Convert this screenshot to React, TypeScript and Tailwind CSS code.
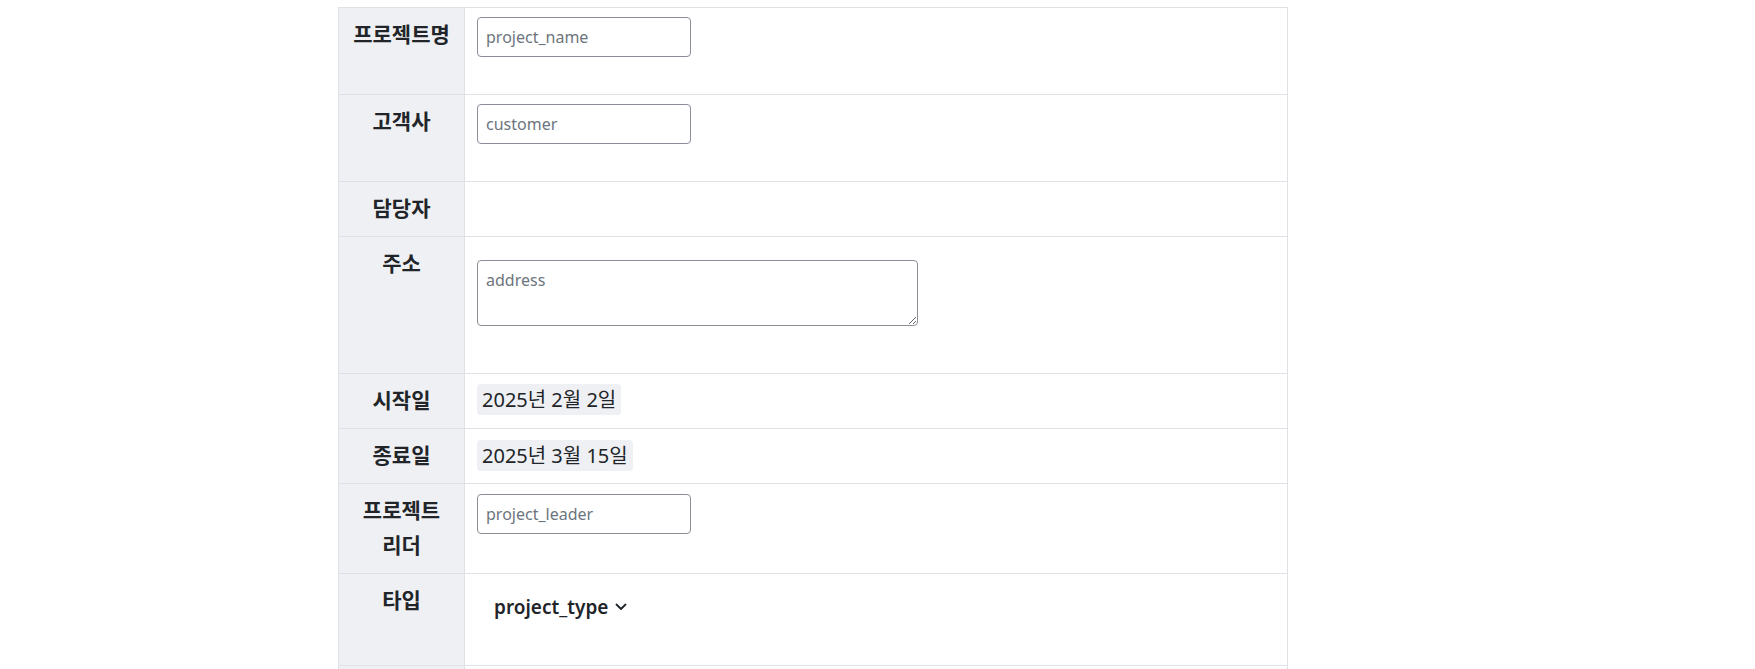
import React from 'react'

const label = "w-[126px] shrink-0 border-r border-[#dee2e6] bg-[#eff0f3] pt-[9px] text-center text-[21px] leading-[35px] font-bold text-[#212529]"
const inputCls = "block w-[214px] h-[40px] rounded-[4px] border border-[#8d8d98] bg-white px-[8px] text-[16px] text-[#212529] placeholder:text-[#6c757d] outline-none"

function Row({ h, name, children, cellCls }: { h: string; name: React.ReactNode; children?: React.ReactNode; cellCls?: string }) {
  return (
    <div className={`flex border-b border-[#dee2e6] ${h}`}>
      <div className={label}>{name}</div>
      <div className={`flex-1 px-[12px] ${cellCls ?? 'pt-[9px]'}`}>{children}</div>
    </div>
  )
}

function DateChip({ text }: { text: string }) {
  return (
    <span className="inline-block rounded-[4px] bg-[#eff0f3] px-[5px] pt-[1px] text-[20px] leading-[30px] text-[#212529]">{text}</span>
  )
}

export default function App() {
  return (
    <div className="min-h-screen bg-white pt-[7px] font-['Noto_Sans','Noto_Sans_CJK_KR',sans-serif]">
      <div className="ml-[338px] w-[950px] border-l border-t border-r border-[#dee2e6]">
        <Row h="h-[87px]" name="프로젝트명">
          <input className={inputCls} placeholder="project_name" />
        </Row>
        <Row h="h-[87px]" name="고객사">
          <input className={inputCls} placeholder="customer" />
        </Row>
        <Row h="h-[55px]" name="담당자" />
        <Row h="h-[137px]" name="주소" cellCls="pt-[23px]">
          <textarea
            className="block w-[441px] h-[66px] rounded-[4px] border border-[#8d8d98] bg-white px-[8px] py-[6px] text-[16px] leading-[26px] text-[#212529] placeholder:text-[#6c757d] outline-none"
            placeholder="address"
          />
        </Row>
        <Row h="h-[55px]" name="시작일" cellCls="pt-[10px]">
          <DateChip text="2025년 2월 2일" />
        </Row>
        <Row h="h-[55px]" name="종료일" cellCls="pt-[11px]">
          <DateChip text="2025년 3월 15일" />
        </Row>
        <Row h="h-[90px]" name={<>프로젝트<br />리더</>} cellCls="pt-[10px]">
          <input className={inputCls} placeholder="project_leader" />
        </Row>
        <Row h="h-[92px]" name="타입" cellCls="pt-[18px]">
          <button className="flex items-center gap-[7px] pl-[17px] text-[19px] leading-[30px] font-semibold text-[#212529]">
            project_type
            <svg width="12" height="8" viewBox="0 0 12 8" fill="none">
              <path d="M1.5 1.5 L6 6 L10.5 1.5" stroke="#212529" strokeWidth="1.8" strokeLinecap="round" strokeLinejoin="round" />
            </svg>
          </button>
        </Row>
        <Row h="h-[80px]" name="" />
      </div>
    </div>
  )
}
